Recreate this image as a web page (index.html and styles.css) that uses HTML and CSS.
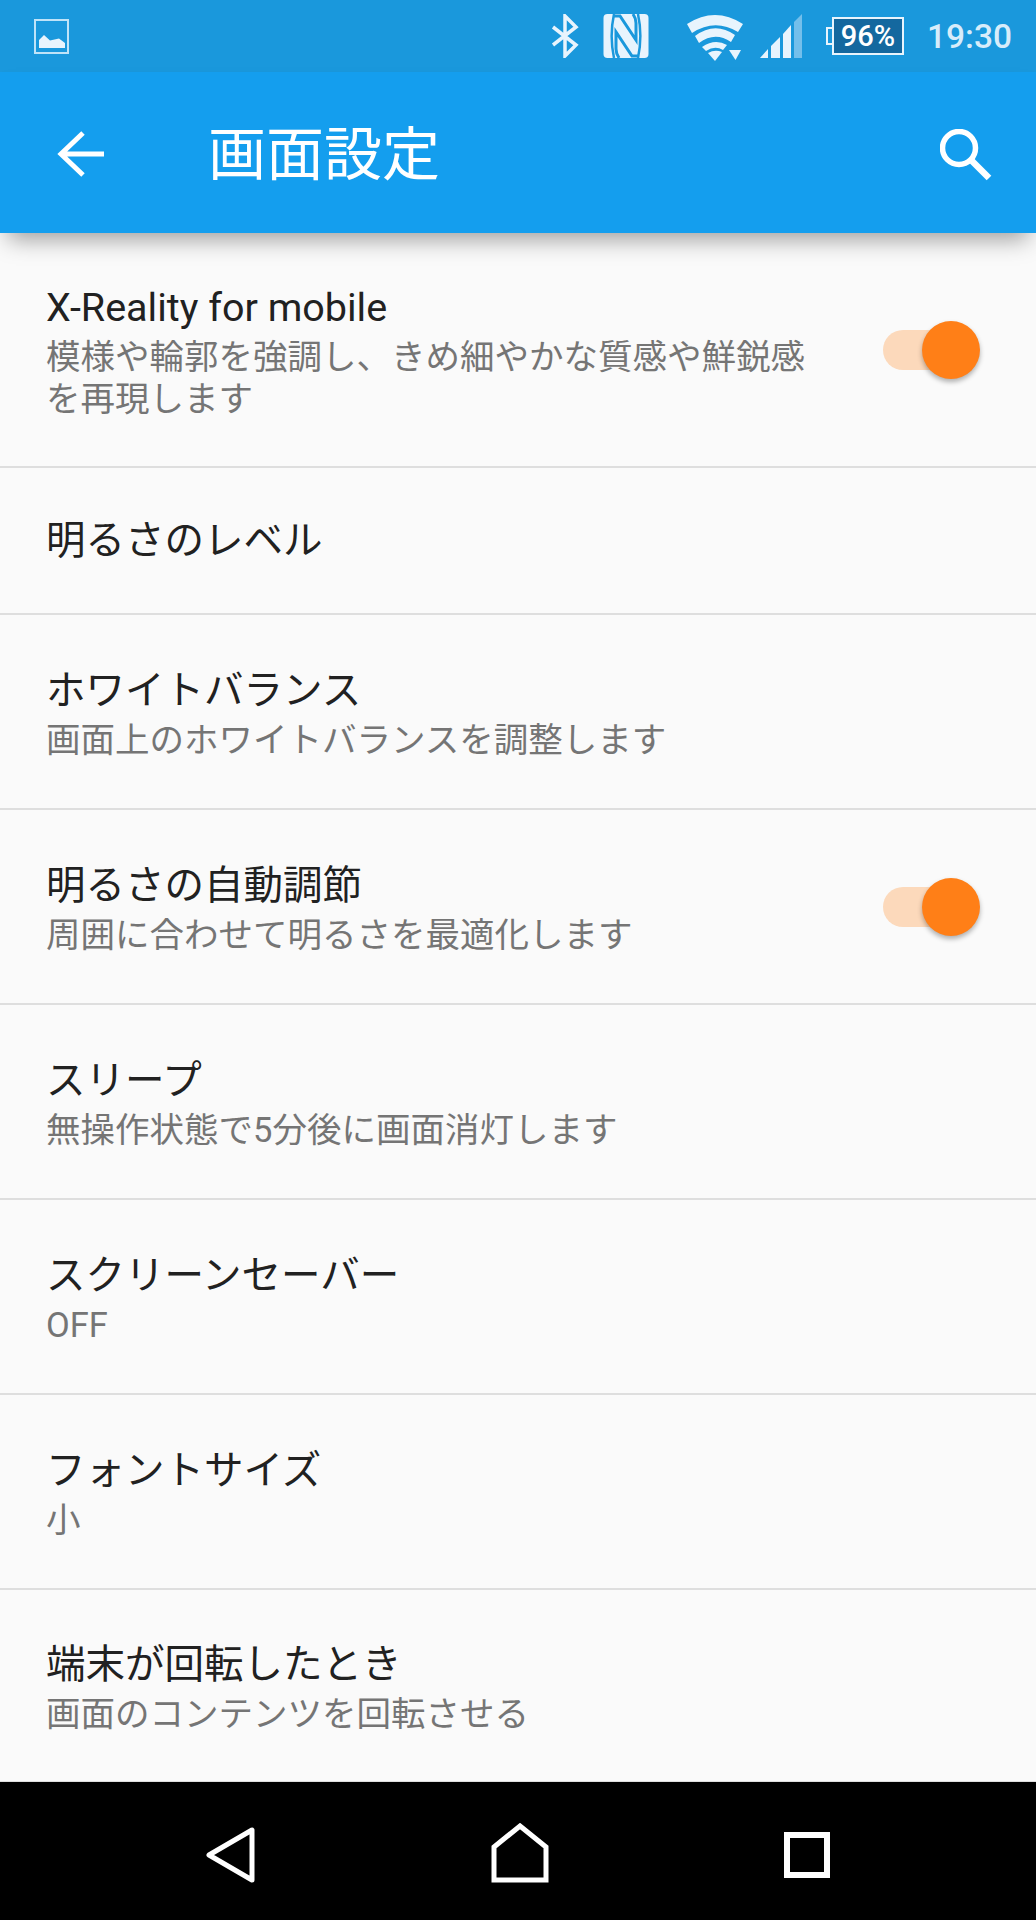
FILE: index.html
```html
<!DOCTYPE html>
<html lang="ja">
<head>
    <meta charset="UTF-8">
    <meta name="viewport" content="width=device-width, initial-scale=1.0">
    <title>画面設定</title>
    <link rel="stylesheet" href="styles.css">
</head>
<body>

<div class="screen">
    <div class="status-bar">
        <svg class="icon-picture" width="35" height="35" viewBox="0 0 35 35">
            <rect x="1" y="1" width="33" height="33" fill="none" stroke="#bfe3f8" stroke-width="2"/>
            <path d="M5 29V21L10 16L16 21.500L25 19.500L31 24V29Z" fill="#e8f4fd"/>
        </svg>
        <div class="status-right">
            <svg width="28" height="44" viewBox="0 0 28 44">
                <path d="M2 13L25 31L14 42V2L25 13L2 31" fill="none" stroke="#e8f4fd" stroke-width="3.500"/>
            </svg>
            <svg class="icon-nfc" width="46" height="46" viewBox="0 0 46 46">
                <rect x="0.500" y="1" width="45" height="44" rx="4" fill="#e8f4fd"/>
                <path d="M11 1C8 15 8 31 11 45M35 1C38 15 38 31 35 45" fill="none" stroke="#1a98dc" stroke-width="2.500"/>
                <path d="M11 3H17L33 27V10C33 7 32 4 30 1M35 43H29L13 19V36C13 39 14 42 16 45" fill="none" stroke="#1a98dc" stroke-width="3"/>
            </svg>
            <svg class="icon-wifi" width="56" height="46" viewBox="0 0 56 46">
                <path d="M0 9Q28 -9 56 9L51 17Q28 3 5 18Z" fill="#e8f4fd"/>
                <path d="M8 21Q28 6 48 20L44 27Q28 16 12 28Z" fill="#e8f4fd"/>
                <path d="M15 32Q28 23 40 30L36 35Q28 30 19 36Z" fill="#e8f4fd"/>
                <path d="M21 38Q28 34 35 37L28 46Z" fill="#e8f4fd"/>
                <path d="M42 35H54L48.500 45Z" fill="#e8f4fd"/>
            </svg>
            <svg class="icon-signal" width="44" height="46" viewBox="0 0 44 46">
                <path d="M1 45L9 36V45Z" fill="#e8f4fd"/>
                <path d="M12 33L21 24V45H12Z" fill="#e8f4fd"/>
                <path d="M24 21L32 12V45H24Z" fill="#e8f4fd"/>
                <path d="M35 9L43 1V45H35Z" fill="#74bfeb"/>
            </svg>
            <div class="battery"><span>96%</span></div>
            <span class="clock">19:30</span>
        </div>
    </div>

    <div class="app-bar">
        <svg class="icon-back" width="48" height="48" viewBox="0 0 48 48">
            <path d="M47 24H4M26 3L4 24L26 45" fill="none" stroke="#fff" stroke-width="5"/>
        </svg>
        <h1>画面設定</h1>
        <svg class="icon-search" width="52" height="52" viewBox="0 0 52 52">
            <circle cx="19" cy="19" r="16.500" fill="none" stroke="#fff" stroke-width="5.500"/>
            <path d="M31 31L49 49" fill="none" stroke="#fff" stroke-width="6.500"/>
        </svg>
    </div>

    <div class="list">
        <div class="item item-first">
            <div class="item-text item-text-narrow">
                <div class="item-title">X-Reality for mobile</div>
                <div class="item-sub">模様や輪郭を強調し、きめ細やかな質感や鮮鋭感を再現します</div>
            </div>
            <div class="switch"><div class="switch-thumb"></div></div>
        </div>
        <div class="item item-short">
            <div class="item-text">
                <div class="item-title">明るさのレベル</div>
            </div>
        </div>
        <div class="item">
            <div class="item-text">
                <div class="item-title">ホワイトバランス</div>
                <div class="item-sub">画面上のホワイトバランスを調整します</div>
            </div>
        </div>
        <div class="item">
            <div class="item-text">
                <div class="item-title">明るさの自動調節</div>
                <div class="item-sub">周囲に合わせて明るさを最適化します</div>
            </div>
            <div class="switch"><div class="switch-thumb"></div></div>
        </div>
        <div class="item">
            <div class="item-text">
                <div class="item-title">スリープ</div>
                <div class="item-sub">無操作状態で5分後に画面消灯します</div>
            </div>
        </div>
        <div class="item">
            <div class="item-text">
                <div class="item-title">スクリーンセーバー</div>
                <div class="item-sub">OFF</div>
            </div>
        </div>
        <div class="item">
            <div class="item-text">
                <div class="item-title">フォントサイズ</div>
                <div class="item-sub">小</div>
            </div>
        </div>
        <div class="item item-last">
            <div class="item-text">
                <div class="item-title">端末が回転したとき</div>
                <div class="item-sub">画面のコンテンツを回転させる</div>
            </div>
        </div>
    </div>

    <div class="nav-bar">
        <svg class="nav-low" width="50" height="56" viewBox="0 0 50 56">
            <path d="M46 3V53L3 28Z" fill="none" stroke="#fff" stroke-width="5" stroke-linejoin="round"/>
        </svg>
        <svg width="58" height="60" viewBox="0 0 58 60">
            <path d="M29 3L55 24V57H3V24Z" fill="none" stroke="#fff" stroke-width="5"/>
        </svg>
        <svg class="nav-low" width="46" height="46" viewBox="0 0 46 46">
            <rect x="3" y="3" width="40" height="40" fill="none" stroke="#fff" stroke-width="6"/>
        </svg>
    </div>
</div>

</body>
</html>
```

FILE: styles.css
```css
body {
    margin: 0;
    font-family: "Roboto", "Noto Sans CJK JP", sans-serif;
    background-color: #fafafa;
}
.screen {
    width: 1036px;
    height: 1920px;
    display: flex;
    flex-direction: column;
    overflow: hidden;
}
.status-bar {
    height: 72px;
    flex: none;
    background-color: #1a98dc;
    display: flex;
    justify-content: space-between;
    align-items: center;
    padding: 0 24px 0 34px;
}
.status-right {
    display: flex;
    align-items: center;
}
.icon-nfc {
    margin-left: 24px;
}
.icon-wifi {
    margin-left: 38px;
    margin-top: 4px;
}
.icon-signal {
    margin-left: 16px;
}
.battery {
    width: 72px;
    height: 38px;
    margin-left: 29px;
    background-color: #14689f;
    border: 2px solid #e8f4fd;
    box-sizing: border-box;
    position: relative;
    display: flex;
    align-items: center;
    justify-content: center;
}
.battery::before {
    content: "";
    position: absolute;
    left: -8px;
    top: 8px;
    width: 6px;
    height: 18px;
    border: 2px solid #e8f4fd;
    border-right: none;
    box-sizing: border-box;
}
.battery span {
    font-size: 29px;
    font-weight: 500;
    color: #fff;
}
.clock {
    margin-left: 23px;
    font-size: 33.500px;
    font-weight: 500;
    color: #d7ecfa;
}
.app-bar {
    height: 161px;
    flex: none;
    background-color: #149eee;
    display: flex;
    align-items: center;
    padding: 0 44px 0 57px;
    box-shadow: 0 14px 22px -8px rgba(0, 0, 0, 0.38);
    position: relative;
}
.icon-back {
    margin-top: 2px;
}
.icon-search {
    margin-top: 4px;
}
.app-bar h1 {
    margin: 0 0 6px 103px;
    flex: 1;
    font-size: 58px;
    font-weight: 400;
    color: #fff;
}
.list {
    flex: 1;
    min-height: 0;
}
.item {
    height: 195px;
    box-sizing: border-box;
    border-bottom: 2px solid #dedede;
    display: flex;
    align-items: center;
    justify-content: space-between;
    padding: 0 75px 0 46px;
}
.item-first {
    height: 235px;
}
.item-short {
    height: 147px;
}
.item-last {
    height: 193px;
}
.item-text-narrow {
    width: 770px;
}
.item-title {
    font-size: 39.500px;
    line-height: 57px;
    color: #212121;
}
.item-sub {
    font-size: 34.500px;
    line-height: 42px;
    color: #757575;
}
.switch {
    width: 78px;
    height: 40px;
    background-color: #fcd9bb;
    border-radius: 20px;
    position: relative;
}
.switch-thumb {
    position: absolute;
    top: -9px;
    right: -19px;
    width: 58px;
    height: 58px;
    border-radius: 50%;
    background-color: #ff7f17;
    box-shadow: 0 3px 5px rgba(0, 0, 0, 0.3);
}
.nav-bar {
    height: 138px;
    flex: none;
    box-sizing: border-box;
    background-color: #000;
    display: flex;
    align-items: center;
    padding: 4px 206px 0;
    justify-content: space-between;
}
.nav-low {
    margin-top: 4px;
}
```
